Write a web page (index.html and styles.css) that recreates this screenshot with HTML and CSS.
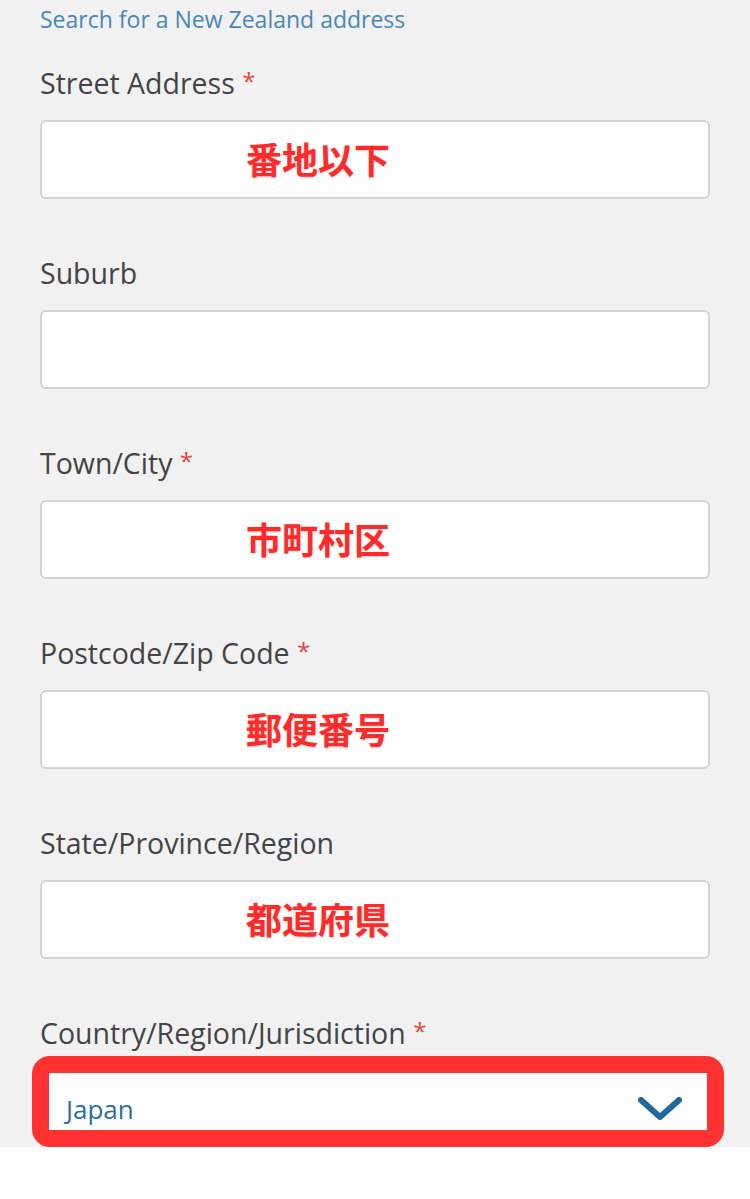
FILE: index.html
```html
<!DOCTYPE html>
<html lang="en">
<head>
<meta charset="utf-8">
<link rel="stylesheet" href="styles.css">
</head>
<body>
<div class="form">
  <a class="search-link">Search for a New Zealand address</a>

  <div class="field">
    <div class="label">Street Address <span class="req">*</span></div>
    <div class="input"><span class="note">番地以下</span></div>
  </div>

  <div class="field">
    <div class="label">Suburb</div>
    <div class="input"></div>
  </div>

  <div class="field">
    <div class="label">Town/City <span class="req">*</span></div>
    <div class="input"><span class="note">市町村区</span></div>
  </div>

  <div class="field">
    <div class="label">Postcode/Zip Code <span class="req">*</span></div>
    <div class="input"><span class="note">郵便番号</span></div>
  </div>

  <div class="field">
    <div class="label">State/Province/Region</div>
    <div class="input"><span class="note">都道府県</span></div>
  </div>

  <div class="field last">
    <div class="label">Country/Region/Jurisdiction <span class="req">*</span></div>
    <div class="select-wrap">
      <div class="select">
        <span class="select-value">Japan</span>
        <svg class="chevron" width="44" height="24" viewBox="0 0 44 24"><path d="M3 3 L22 20 L41 3" fill="none" stroke="#1f6a9a" stroke-width="6" stroke-linecap="round" stroke-linejoin="round"/></svg>
      </div>
      <div class="highlight"></div>
    </div>
  </div>
</div>
</body>
</html>
```

FILE: styles.css
```css
html, body {
  margin: 0;
  padding: 0;
  background: #ffffff;
}

.form {
  background: #f1f1f1;
  height: 1147px;
  padding: 4px 40px 0 40px;
  box-sizing: border-box;
  font-family: "Open Sans", "Liberation Sans", sans-serif;
  overflow: hidden;
}

.search-link {
  display: block;
  font-size: 23px;
  line-height: 30px;
  color: #4a86b8;
  margin-bottom: 29px;
}

.field {
  margin-bottom: 54px;
}

.label {
  font-size: 28.5px;
  line-height: 40px;
  height: 40px;
  color: #444444;
  margin-bottom: 17px;
}

.req {
  color: #e0463e;
  font-size: 24px;
  line-height: 1;
  position: relative;
  top: -4px;
}

.input {
  width: 670px;
  height: 79px;
  box-sizing: border-box;
  background: #ffffff;
  border: 2px solid #d3d3d3;
  border-radius: 6px;
  display: flex;
  align-items: center;
  padding-left: 204px;
}

.note {
  font-family: "Noto Sans CJK JP", sans-serif;
  font-weight: 700;
  font-size: 36px;
  line-height: 40px;
  color: #ff2b2b;
  text-shadow: 0 1px 2px rgba(0, 0, 0, 0.18);
  position: relative;
  top: -2px;
}

.select-wrap {
  position: relative;
  width: 670px;
}

.select {
  height: 79px;
  box-sizing: border-box;
  background: #ffffff;
  border: 2px solid #d3d3d3;
  border-radius: 6px;
  display: flex;
  align-items: center;
  justify-content: space-between;
  padding: 0 26px 2px 24px;
}

.select-value {
  font-size: 26px;
  color: #2a6f9e;
}

.chevron {
  display: block;
}

.highlight {
  position: absolute;
  left: -8px;
  top: -14px;
  width: 692px;
  height: 91px;
  box-sizing: border-box;
  border: 17px solid #ff3131;
  border-radius: 18px;
}
```
